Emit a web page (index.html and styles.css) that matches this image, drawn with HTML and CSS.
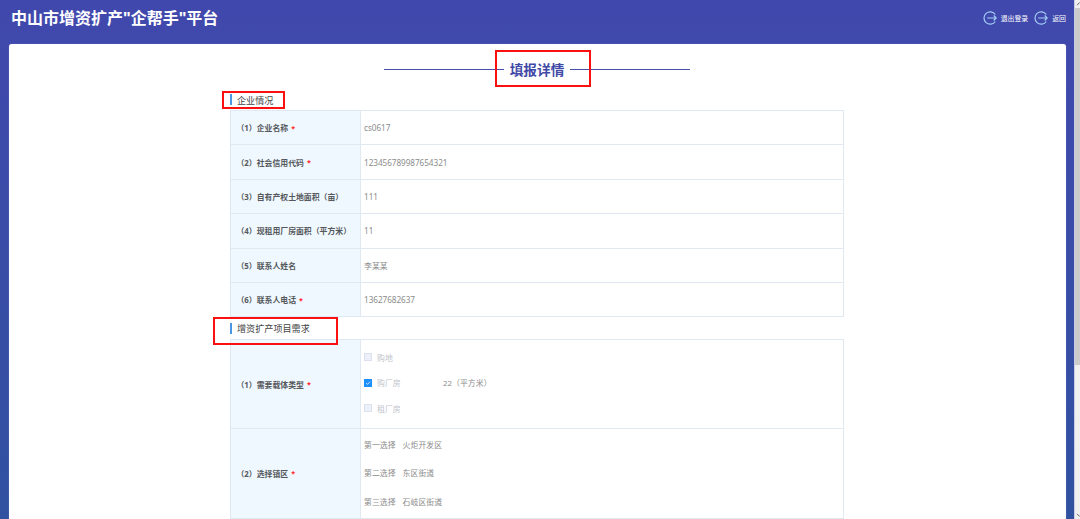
FILE: index.html
```
<!DOCTYPE html>
<html lang="zh-CN">

<head>
  <meta charset="utf-8">
  <title>填报详情</title>
  <link rel="stylesheet" href="styles.css">
</head>

<body>
  <div class="page">
    <header>
      <h1>中山市增资扩产"企帮手"平台</h1>
      <nav>
        <a>
          <svg viewBox="0 0 14 14"><path d="M12.3 3.5A6.2 6.2 0 1 0 12.3 10.5M4.2 7H13.2M10.7 4.5L13.2 7L10.7 9.5" /></svg>
          <span>退出登录</span>
        </a>
        <a>
          <svg viewBox="0 0 14 14"><path d="M12.3 3.5A6.2 6.2 0 1 0 12.3 10.5M4.2 7H13.2M10.7 4.5L13.2 7L10.7 9.5" /></svg>
          <span>返回</span>
        </a>
      </nav>
    </header>

    <main>
      <div class="heading"><h2>填报详情</h2></div>
      <div class="form">
        <h3>企业情况</h3>
        <div class="table">
          <div class="row"><div class="label">（1）企业名称<i>*</i></div><div class="value number">cs0617</div></div>
          <div class="row"><div class="label">（2）社会信用代码<i>*</i></div><div class="value number">123456789987654321</div></div>
          <div class="row"><div class="label">（3）自有产权土地面积（亩）</div><div class="value number">111</div></div>
          <div class="row"><div class="label">（4）现租用厂房面积（平方米）</div><div class="value number">11</div></div>
          <div class="row"><div class="label">（5）联系人姓名</div><div class="value">李某某</div></div>
          <div class="row"><div class="label">（6）联系人电话<i>*</i></div><div class="value number">13627682637</div></div>
        </div>
        <h3>增资扩产项目需求</h3>
        <div class="table">
          <div class="row types">
            <div class="label">（1）需要载体类型<i>*</i></div>
            <div class="value">
              <div class="option"><span class="box"></span><span class="name">购地</span></div>
              <div class="option">
                <span class="box checked"><svg viewBox="0 0 8 8"><path d="M2 4L3.5 5.4L6.1 2.6" /></svg></span>
                <span class="name">购厂房</span><span>22（平方米）</span>
              </div>
              <div class="option"><span class="box"></span><span class="name">租厂房</span></div>
            </div>
          </div>
          <div class="row towns">
            <div class="label">（2）选择镇区<i>*</i></div>
            <div class="value">
              <div class="choice"><span>第一选择</span><span>火炬开发区</span></div>
              <div class="choice"><span>第二选择</span><span>东区街道</span></div>
              <div class="choice"><span>第三选择</span><span>石岐区街道</span></div>
            </div>
          </div>
        </div>
      </div>
    </main>
  </div>

  <div class="scrollbar">
    <svg viewBox="0 0 5 8"><path d="M2 5.2L4.5 2.7L5 3.2" /></svg>
    <div class="thumb"></div>
    <svg class="down" viewBox="0 0 5 8"><path d="M2 2.8L4.5 5.3L5 4.8" /></svg>
  </div>

  <!-- red marks around the headings -->
  <div class="mark mark-title"></div>
  <div class="mark mark-company"></div>
  <div class="mark mark-project"></div>
</body>

</html>
```
FILE: styles.css
```
* {
  box-sizing: border-box;
}

body {
  margin: 0;
  height: 519px;
  display: flex;
  overflow: hidden;
  font-family: "Noto Sans", "Noto Sans CJK SC", sans-serif;
  font-size: 7.87px;
  color: #8c8c8c;
}

h1, h2, h3 {
  margin: 0;
}

.page {
  flex: 1;
  display: flex;
  flex-direction: column;
  padding: 0 8px 0 8.5px;
  background: linear-gradient(#4148ad, #3051a0);
}

header {
  height: 43.5px;
  flex: none;
  display: flex;
  justify-content: space-between;
  align-items: center;
  padding: 0 0 7.5px 2.5px;
}
header h1 {
  font-size: 16px;
  line-height: 20px;
  color: #fff;
}

nav {
  display: flex;
  gap: 6px;
}
nav a {
  display: flex;
  align-items: center;
  gap: 4px;
  font-size: 6.9px;
  color: #fff;
}
nav svg {
  width: 14px;
  height: 14px;
  fill: none;
  stroke: #a3cdf5;
  stroke-width: 1.2;
}

main {
  flex: 1;
  min-height: 0;
  background: #fff;
  border-radius: 3px 3px 0 0;
  box-shadow: 0 0 1px rgba(190, 195, 235, .8);
}

.heading {
  width: 306px;
  height: 47.5px;
  margin: 0 0 0 375.5px;
  padding-top: 3.5px;
  display: flex;
  align-items: center;
  gap: 5.5px;
}
.heading::before, .heading::after {
  content: "";
  flex: 1;
  height: 1px;
  background: #4450ac;
}
.heading h2 {
  font-size: 13.7px;
  color: #4149a6;
}

.form {
  width: 613.5px;
  margin-left: 221.5px;
}
.form h3 {
  height: 22px;
  display: flex;
  align-items: center;
  font-size: 9.1px;
  font-weight: normal;
  color: #444;
}
.form h3:first-child {
  height: 19px;
  padding-bottom: 2px;
}
.form h3::before {
  content: "";
  width: 2px;
  height: 11px;
  margin-right: 5px;
  background: #4a95e4;
}

.table {
  border: 1px solid #e0e9f2;
  border-bottom: 0;
}
.row {
  display: flex;
  height: 34.42px;
  border-bottom: 1px solid #e0e9f2;
}
.types {
  height: 88.5px;
}
.towns {
  height: 90px;
}

.label {
  width: 130px;
  flex: none;
  display: flex;
  align-items: center;
  padding-left: 5.5px;
  background: #f0f8ff;
  border-right: 1px solid #e0e9f2;
  font-weight: bold;
  color: #55585c;
}
.label i {
  margin-left: 3px;
  font-size: 7.2px;
  font-style: normal;
  color: #f22;
}

.value {
  flex: 1;
  display: flex;
  flex-direction: column;
  justify-content: center;
  padding-left: 3px;
  letter-spacing: .04px;
}
.number {
  font-size: 8.2px;
  letter-spacing: -.05px;
}
.types .value {
  padding-bottom: 3px;
}
.towns .value {
  padding-bottom: 1px;
}

.option {
  height: 25.7px;
  display: flex;
  align-items: center;
}
.option .name {
  width: 66px;
  color: #c0c4cc;
}
.box {
  width: 8px;
  height: 8px;
  margin-right: 5px;
  background: #edf0fa;
  border: 1px solid #dce1ee;
}
.checked {
  background: #1e8fff;
  border: 0;
}
.checked svg {
  display: block;
  fill: none;
  stroke: #d5eaff;
  stroke-width: .9;
}

.choice {
  height: 28.2px;
  display: flex;
  align-items: center;
  gap: 7px;
}

.scrollbar {
  width: 6px;
  display: flex;
  flex-direction: column;
  background: #f0f0f1;
  border-left: 1px solid #c9cce6;
}
.scrollbar svg {
  width: 5px;
  height: 8px;
  fill: none;
  stroke: #666;
}
.scrollbar .thumb {
  height: 357px;
  background: #cbcbcc;
}
.scrollbar .down {
  margin-top: auto;
}

.mark {
  position: absolute;
  border: 2px solid #fb1010;
}
.mark-title {
  left: 495px;
  top: 50px;
  width: 96px;
  height: 37px;
}
.mark-company {
  left: 222px;
  top: 91px;
  width: 63px;
  height: 18px;
}
.mark-project {
  left: 213px;
  top: 317px;
  width: 125px;
  height: 28px;
}
```
